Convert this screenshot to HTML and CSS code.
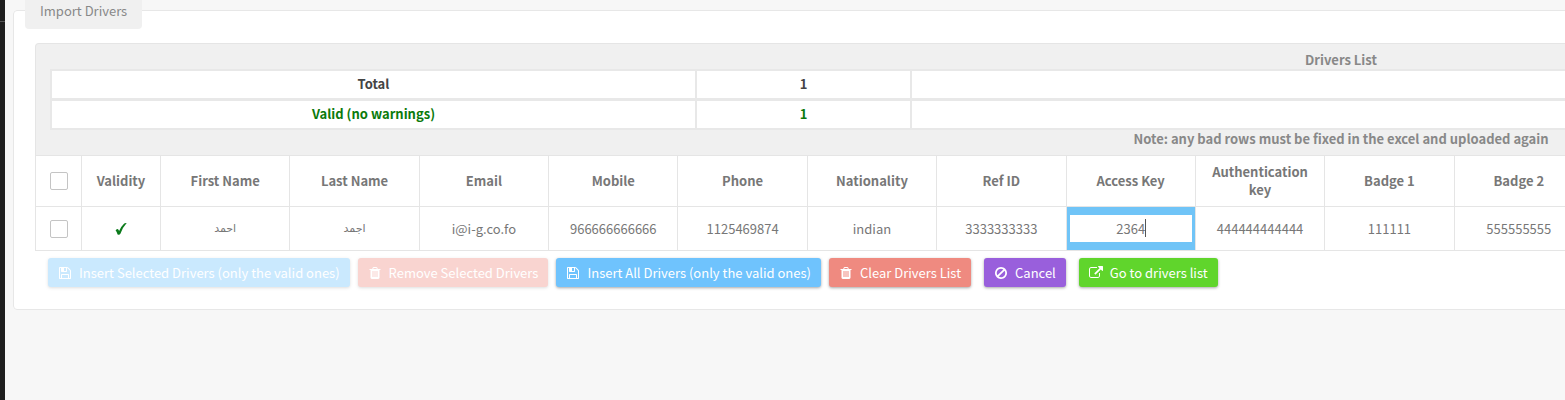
FILE: index.html
```html
<!DOCTYPE html>
<html lang="en">
<head>
<meta charset="utf-8">
<title>Import Drivers</title>
<link rel="stylesheet" href="styles.css">
</head>
<body>
<svg class="sprite" aria-hidden="true">
  <symbol id="save" viewBox="0 0 1536 1792"><path d="M384 1536h768v-384H384v384zm896 0h128V640q0-14-10-38.500t-20-34.500l-281-281q-10-10-34-20t-39-10v416q0 40-28 68t-68 28H352q-40 0-68-28t-28-68V256H128v1280h128v-416q0-40 28-68t68-28h832q40 0 68 28t28 68v416zM896 608V288q0-13-9.500-22.500T864 256H672q-13 0-22.500 9.500T640 288v320q0 13 9.500 22.500T672 640h192q13 0 22.500-9.500T896 608zm640 32v928q0 40-28 68t-68 28H96q-40 0-68-28t-28-68V224q0-40 28-68t68-28h928q40 0 88 20t76 48l280 280q28 28 48 76t20 88z"/></symbol>
  <symbol id="trash" viewBox="0 0 1408 1792"><path d="M512 1376V672q0-14-9-23t-23-9h-64q-14 0-23 9t-9 23v704q0 14 9 23t23 9h64q14 0 23-9t9-23zm256 0V672q0-14-9-23t-23-9h-64q-14 0-23 9t-9 23v704q0 14 9 23t23 9h64q14 0 23-9t9-23zm256 0V672q0-14-9-23t-23-9h-64q-14 0-23 9t-9 23v704q0 14 9 23t23 9h64q14 0 23-9t9-23zM480 384h448l-48-117q-7-9-17-11H546q-10 2-17 11zm928 32v64q0 14-9 23t-23 9h-96v948q0 83-47 143.500t-113 60.500H288q-66 0-113-58.500T128 1464V512H32q-14 0-23-9t-9-23v-64q0-14 9-23t23-9h309l70-167q15-37 54-63t79-26h320q40 0 79 26t54 63l70 167h309q14 0 23 9t9 23z"/></symbol>
  <symbol id="ban" viewBox="0 0 1536 1792"><path d="M1312 893q0-161-87-295l-754 753q137 89 297 89 111 0 211.500-43.500T1153 1280t116-174.500 43-212.500zM313 1192l755-754q-135-91-300-91-148 0-273 73T297 619t-73 274q0 162 89 299zm1223-299q0 157-61 300t-163.500 246-245 164-298.500 61-298.500-61-245-164T61 1193 0 893t61-299.500T224.500 348t245-164T768 123t298.500 61 245 164T1475 593.500t61 299.500z"/></symbol>
  <symbol id="external" viewBox="0 0 1792 1792"><path d="M1408 928v320q0 119-84.500 203.500T1120 1536H288q-119 0-203.500-84.500T0 1248V416q0-119 84.500-203.500T288 128h704q14 0 23 9t9 23v64q0 14-9 23t-23 9H288q-66 0-113 47t-47 113v832q0 66 47 113t113 47h832q66 0 113-47t47-113V928q0-14 9-23t23-9h64q14 0 23 9t9 23zm384-864v512q0 26-19 45t-45 19-45-19l-176-176-652 652q-10 10-23 10t-23-10L695 983q-10-10-10-23t10-23l652-652-176-176q-19-19-19-45t19-45 45-19h512q26 0 45 19t19 45z"/></symbol>
</svg>
<div class="page">
  <nav class="rail" aria-label="Menu"></nav>
  <main class="content">
    <fieldset class="panel">
      <legend class="panel-tab">Import Drivers</legend>
      <div class="drivers">
        <header class="summary">
          <h2 class="summary-title">Drivers List</h2>
          <table class="totals">
            <colgroup><col class="totals-label"><col class="totals-count"><col></colgroup>
            <tr class="total"><th scope="row">Total</th><td>1</td><td></td></tr>
            <tr class="valid"><th scope="row">Valid (no warnings)</th><td>1</td><td></td></tr>
          </table>
          <p class="note">Note: any bad rows must be fixed in the excel and uploaded again</p>
        </header>
        <table class="grid">
          <colgroup><col class="col-check"><col class="col-validity"><col span="11"><col class="col-rest"></colgroup>
          <thead>
            <tr>
              <th><input class="tick" type="checkbox" aria-label="Select all drivers"></th>
              <th>Validity</th><th>First Name</th><th>Last Name</th><th>Email</th><th>Mobile</th><th>Phone</th><th>Nationality</th><th>Ref ID</th><th>Access Key</th><th>Authentication key</th><th>Badge 1</th><th>Badge 2</th><th></th>
            </tr>
          </thead>
          <tbody>
            <tr>
              <td><input class="tick" type="checkbox" aria-label="Select driver"></td>
              <td><svg class="check" viewBox="0 0 12 12" role="img" aria-label="Valid"><path d="M0.600 7.400Q1.200 5.800 2.600 5.900Q3.700 6.200 4.100 8.100Q6.300 2.900 9.200 0.400Q10.300-0.100 11.700 0.100Q7.600 4.500 5.400 10.800Q4.900 11.900 3.300 11.800Q2.500 11.800 2.200 10.500Q1.700 8.100 0.600 7.400Z"/></svg></td>
              <td class="arabic" lang="ar">احمد</td><td class="arabic" lang="ar">اجمد</td><td>i@i-g.co.fo</td><td>966666666666</td><td>1125469874</td><td>indian</td><td>3333333333</td>
              <td class="editing"><div class="editor"><input class="editor-input" type="text" value="2364" aria-label="Access Key"><span class="caret"></span></div></td>
              <td>444444444444</td><td>111111</td><td>555555555</td><td></td>
            </tr>
          </tbody>
        </table>
      </div>
      <div class="actions">
        <div class="action-group">
          <button class="btn blue" type="button" disabled><svg class="icon"><use href="#save"/></svg>Insert Selected Drivers (only the valid ones)</button>
          <button class="btn red" type="button" disabled><svg class="icon"><use href="#trash"/></svg>Remove Selected Drivers</button>
          <button class="btn blue" type="button"><svg class="icon"><use href="#save"/></svg>Insert All Drivers (only the valid ones)</button>
          <button class="btn red" type="button"><svg class="icon"><use href="#trash"/></svg>Clear Drivers List</button>
        </div>
        <button class="btn purple" type="button"><svg class="icon"><use href="#ban"/></svg>Cancel</button>
        <button class="btn green" type="button"><svg class="icon"><use href="#external"/></svg>Go to drivers list</button>
      </div>
    </fieldset>
  </main>
</div>
</body>
</html>
```
FILE: styles.css
```css
* { box-sizing: border-box; }

body {
  margin: 0;
  overflow: hidden;
  background: #f7f7f7;
  color: #777;
  font: 13px/18px "Noto Sans CJK SC", "Noto Sans", sans-serif;
}

.sprite { position: absolute; width: 0; height: 0; }

.page { display: flex; min-height: 100vh; }

.rail {
  flex: none;
  width: 5px;
  background: linear-gradient(#555, #555) 0 21px / 100% 1px no-repeat #1e1e1e;
}

.content { flex: 1; min-width: 0; padding-left: 8px; overflow: hidden; }

.panel {
  min-width: 2656px;
  margin: -8px 0 0;
  padding: 14px 22px 22px 21px;
  border: 1px solid #e7e7e7;
  border-radius: 4px;
  background: #fff;
}

.panel-tab {
  margin-left: -10px;
  padding: 10px 15px 9px;
  border-radius: 4px;
  background: #f0f0f0;
  color: #888;
}

.drivers { width: 2612px; }

.summary {
  padding: 7px 14px;
  border: 1px solid #e5e5e5;
  border-bottom: 0;
  border-radius: 4px 4px 0 0;
  background: #f0f0f0;
  color: #888;
  text-align: center;
}

.summary-title { margin: 0; font-size: 13px; line-height: 18px; }

.totals {
  width: 100%;
  table-layout: fixed;
  border-collapse: collapse;
  background: #fff;
  color: #444;
}

.totals-label { width: 645px; }
.totals-count { width: 215px; }

.totals th, .totals td {
  height: 30px;
  padding: 0;
  border: 2px solid #e8e8e8;
  font-weight: 700;
}

.totals .total th, .totals .total td { height: 29px; border-bottom-width: 3px; }

.totals .valid { color: #0b7a0b; }

.note { margin: 0; font-weight: 700; }

.grid {
  width: 100%;
  table-layout: fixed;
  border-collapse: collapse;
  text-align: center;
}

.col-check { width: 46px; }
.col-validity { width: 79px; }
.col-rest { width: 1063px; }

.grid th, .grid td { padding: 0 8px; border: 1px solid #e5e5e5; }
.grid th { height: 51px; }
.grid td { height: 44px; }

.grid .arabic { font-family: "DejaVu Sans", sans-serif; font-size: 11px; }

.tick {
  display: block;
  width: 18px;
  height: 18px;
  margin: 0 auto;
  appearance: none;
  border: 1px solid #c4c4c4;
  border-radius: 2px;
  background: #fff;
}

.check { display: block; width: 12px; height: 12px; margin: 0 auto; fill: #0b7a1b; }

.grid .editing { padding: 0 3px; background: #70c4f7; }

.editor { position: relative; }

.editor-input {
  display: block;
  width: 100%;
  height: 27px;
  padding: 0;
  border: 0;
  outline: 0;
  background: #fff;
  color: inherit;
  font: inherit;
  text-align: center;
}

.caret {
  position: absolute;
  top: 4px;
  left: calc(50% + 14px);
  width: 1px;
  height: 18px;
  background: #555;
}

.actions { display: flex; gap: 13px; padding: 7px 0 0 13px; }
.action-group { display: flex; gap: 8px; }

.btn {
  display: flex;
  align-items: center;
  gap: 7px;
  height: 29px;
  padding: 0 10px;
  border: 0;
  border-radius: 3px;
  color: #fff;
  font: inherit;
  white-space: nowrap;
  box-shadow: 0 1px 3px rgba(0, 0, 0, 0.35);
}

.btn:disabled { opacity: 0.36; }

.icon { width: 14px; height: 14px; fill: currentColor; }

.blue { background: #6fc3fd; }
.red { background: #ef8a80; }
.purple { background: #995fdc; }
.green { background: #60d52c; }
```
